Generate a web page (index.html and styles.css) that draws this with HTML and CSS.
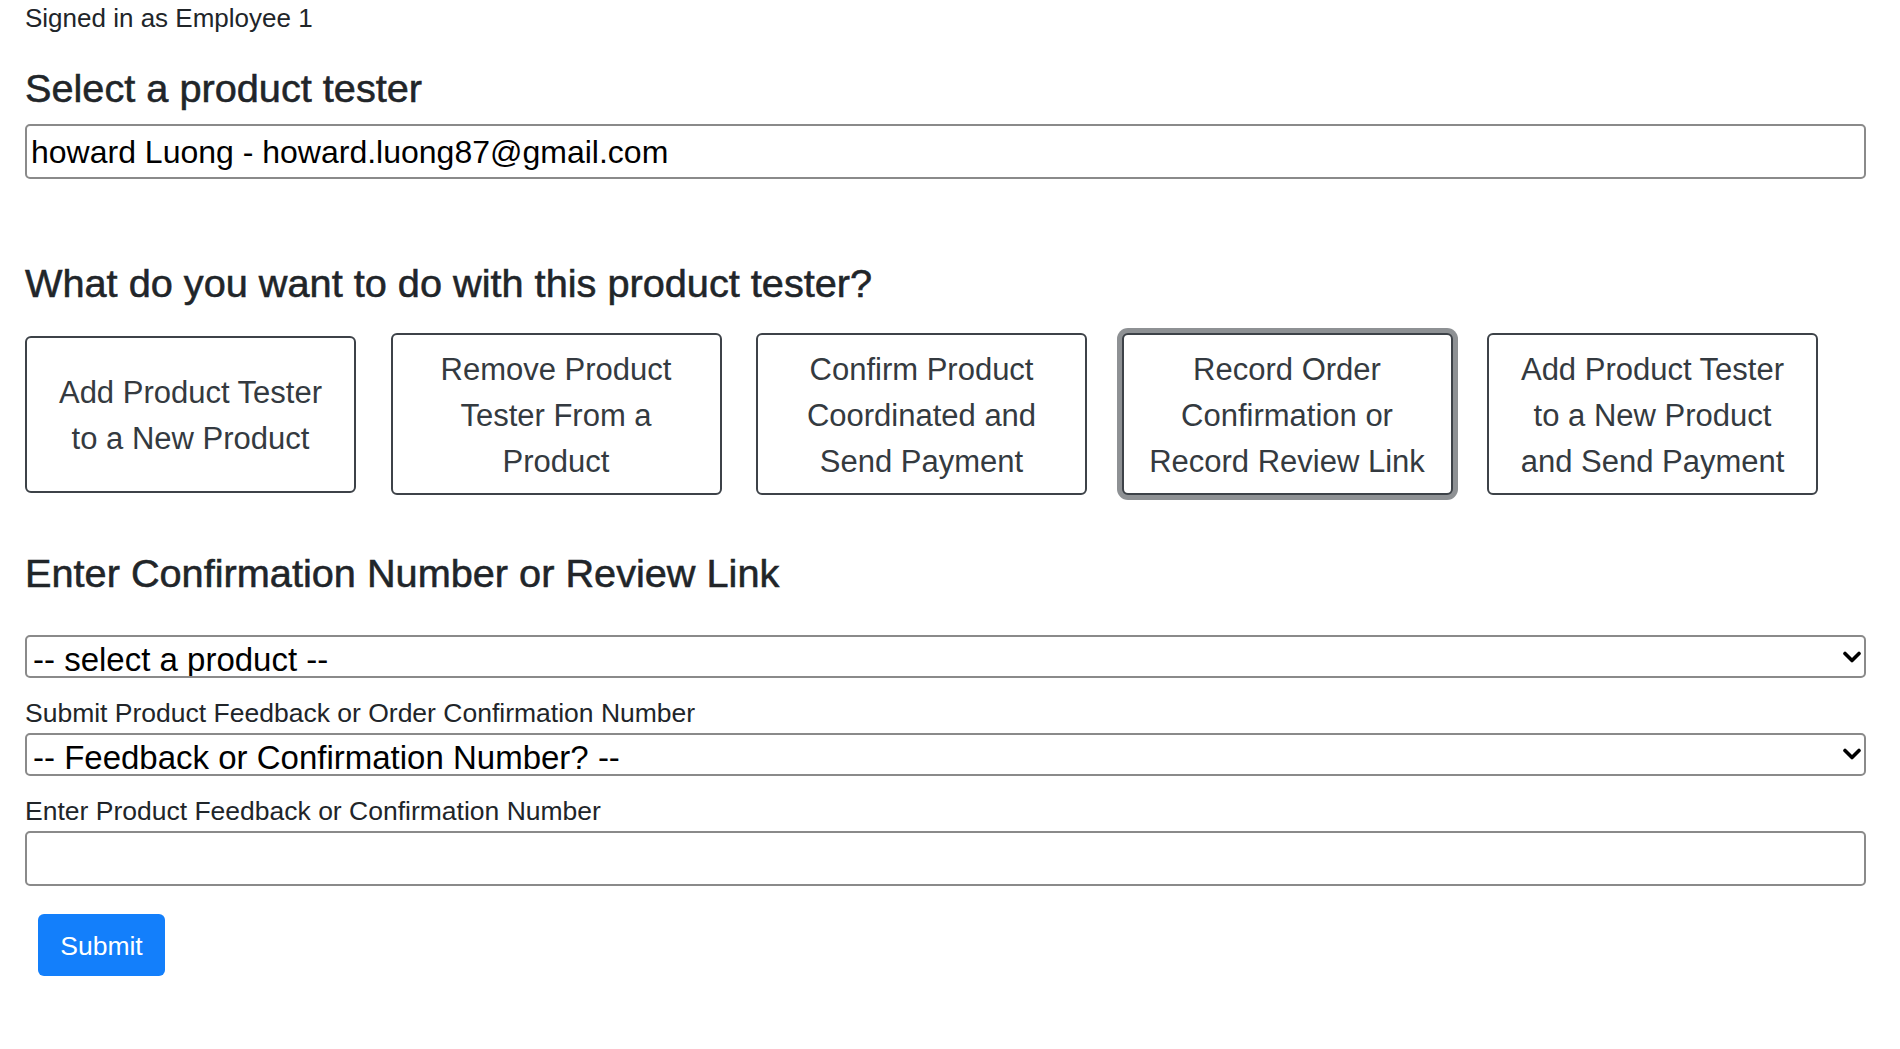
FILE: index.html
```html
<!DOCTYPE html>
<html lang="en">
<head>
<meta charset="utf-8">
<title>Product Tester</title>
<link rel="stylesheet" href="styles.css">
</head>
<body>
<main class="page">
  <p class="signed">Signed in as Employee 1</p>
  <h4 class="title title-first">Select a product tester</h4>
  <input class="field field-top" type="text" value="howard Luong - howard.luong87@gmail.com">

  <h4 class="title title-actions">What do you want to do with this product tester?</h4>
  <div class="actions">
    <button class="action action-short" type="button">Add Product Tester to a New Product</button>
    <button class="action" type="button">Remove Product Tester From a Product</button>
    <button class="action" type="button">Confirm Product Coordinated and Send Payment</button>
    <button class="action is-focused" type="button">Record Order Confirmation or Record Review Link</button>
    <button class="action" type="button">Add Product Tester to a New Product and Send Payment</button>
  </div>

  <h4 class="title title-enter">Enter Confirmation Number or Review Link</h4>
  <div class="select-wrap select-first">
    <select class="picker"><option>-- select a product --</option></select>
    <svg class="chevron" width="18" height="12" viewBox="0 0 18 12"><path d="M2 2.5 L9 9.5 L16 2.5" fill="none" stroke="#000" stroke-width="3.6" stroke-linecap="round" stroke-linejoin="round"/></svg>
  </div>
  <label class="label">Submit Product Feedback or Order Confirmation Number</label>
  <div class="select-wrap">
    <select class="picker"><option>-- Feedback or Confirmation Number? --</option></select>
    <svg class="chevron" width="18" height="12" viewBox="0 0 18 12"><path d="M2 2.5 L9 9.5 L16 2.5" fill="none" stroke="#000" stroke-width="3.6" stroke-linecap="round" stroke-linejoin="round"/></svg>
  </div>
  <label class="label label-second">Enter Product Feedback or Confirmation Number</label>
  <input class="field field-bottom" type="text">
  <button class="submit" type="button">Submit</button>
</main>
</body>
</html>
```

FILE: styles.css
```css
html, body {
  margin: 0;
  background: #fff;
}

body {
  font-family: "Liberation Sans", Arial, sans-serif;
  color: #212529;
}

.page {
  width: 1841px;
  padding: 2.7px 0 0 25px;
}

.signed {
  margin: 0;
  font-size: 26px;
  line-height: 30px;
}

.title {
  margin: 0;
  font-size: 39.7px;
  line-height: 47px;
  font-weight: 400;
  color: #212529;
  -webkit-text-stroke: 0.55px #212529;
}

.title-first { margin-top: 32px; }
.title-actions { margin-top: 80.5px; }
.title-enter { margin-top: 54.5px; }

.field {
  display: block;
  box-sizing: border-box;
  width: 100%;
  height: 55px;
  border: 2px solid #8a8a8a;
  border-radius: 5px;
  padding: 2px 4px 0;
  font-family: "Liberation Sans", Arial, sans-serif;
  font-size: 32px;
  color: #000;
  background: #fff;
  outline: none;
}

.field-top { margin-top: 12.5px; }
.field-bottom { margin-top: 4.2px; }

.actions {
  display: flex;
  align-items: center;
  gap: 34.5px;
  height: 162px;
  margin-top: 26.5px;
}

.action {
  box-sizing: border-box;
  flex: 0 0 331px;
  width: 331px;
  height: 162px;
  padding: 4px 20px 0;
  border: 2px solid #3d4248;
  border-radius: 6px;
  background: #fff;
  color: #343a40;
  font-family: "Liberation Sans", Arial, sans-serif;
  font-size: 31px;
  line-height: 46px;
  text-align: center;
}

.action-short { height: 157px; }

.is-focused {
  box-shadow: 0 0 0 5px #8e9194;
}

.select-wrap {
  position: relative;
  height: 43px;
  margin-top: 4px;
}

.select-first { margin-top: 38.5px; }

.picker {
  -webkit-appearance: none;
  appearance: none;
  box-sizing: border-box;
  display: block;
  width: 100%;
  height: 43px;
  padding: 4px 40px 0 6px;
  border: 2px solid #8a8a8a;
  border-radius: 5px;
  background: #fff;
  color: #000;
  font-family: "Liberation Sans", Arial, sans-serif;
  font-size: 33px;
  outline: none;
}

.chevron {
  position: absolute;
  right: 5px;
  top: 50%;
  transform: translateY(-50%);
  pointer-events: none;
}

.label {
  display: block;
  margin-top: 18.5px;
  font-size: 26.5px;
  line-height: 32px;
  color: #212529;
}

.label-second { margin-top: 19.3px; }

.submit {
  display: block;
  box-sizing: border-box;
  width: 127px;
  height: 62px;
  margin: 28.3px 0 0 13px;
  padding: 2px 0 0;
  border: none;
  border-radius: 6px;
  background: #137ffb;
  color: #fff;
  font-family: "Liberation Sans", Arial, sans-serif;
  font-size: 26.5px;
  text-align: center;
}
```
